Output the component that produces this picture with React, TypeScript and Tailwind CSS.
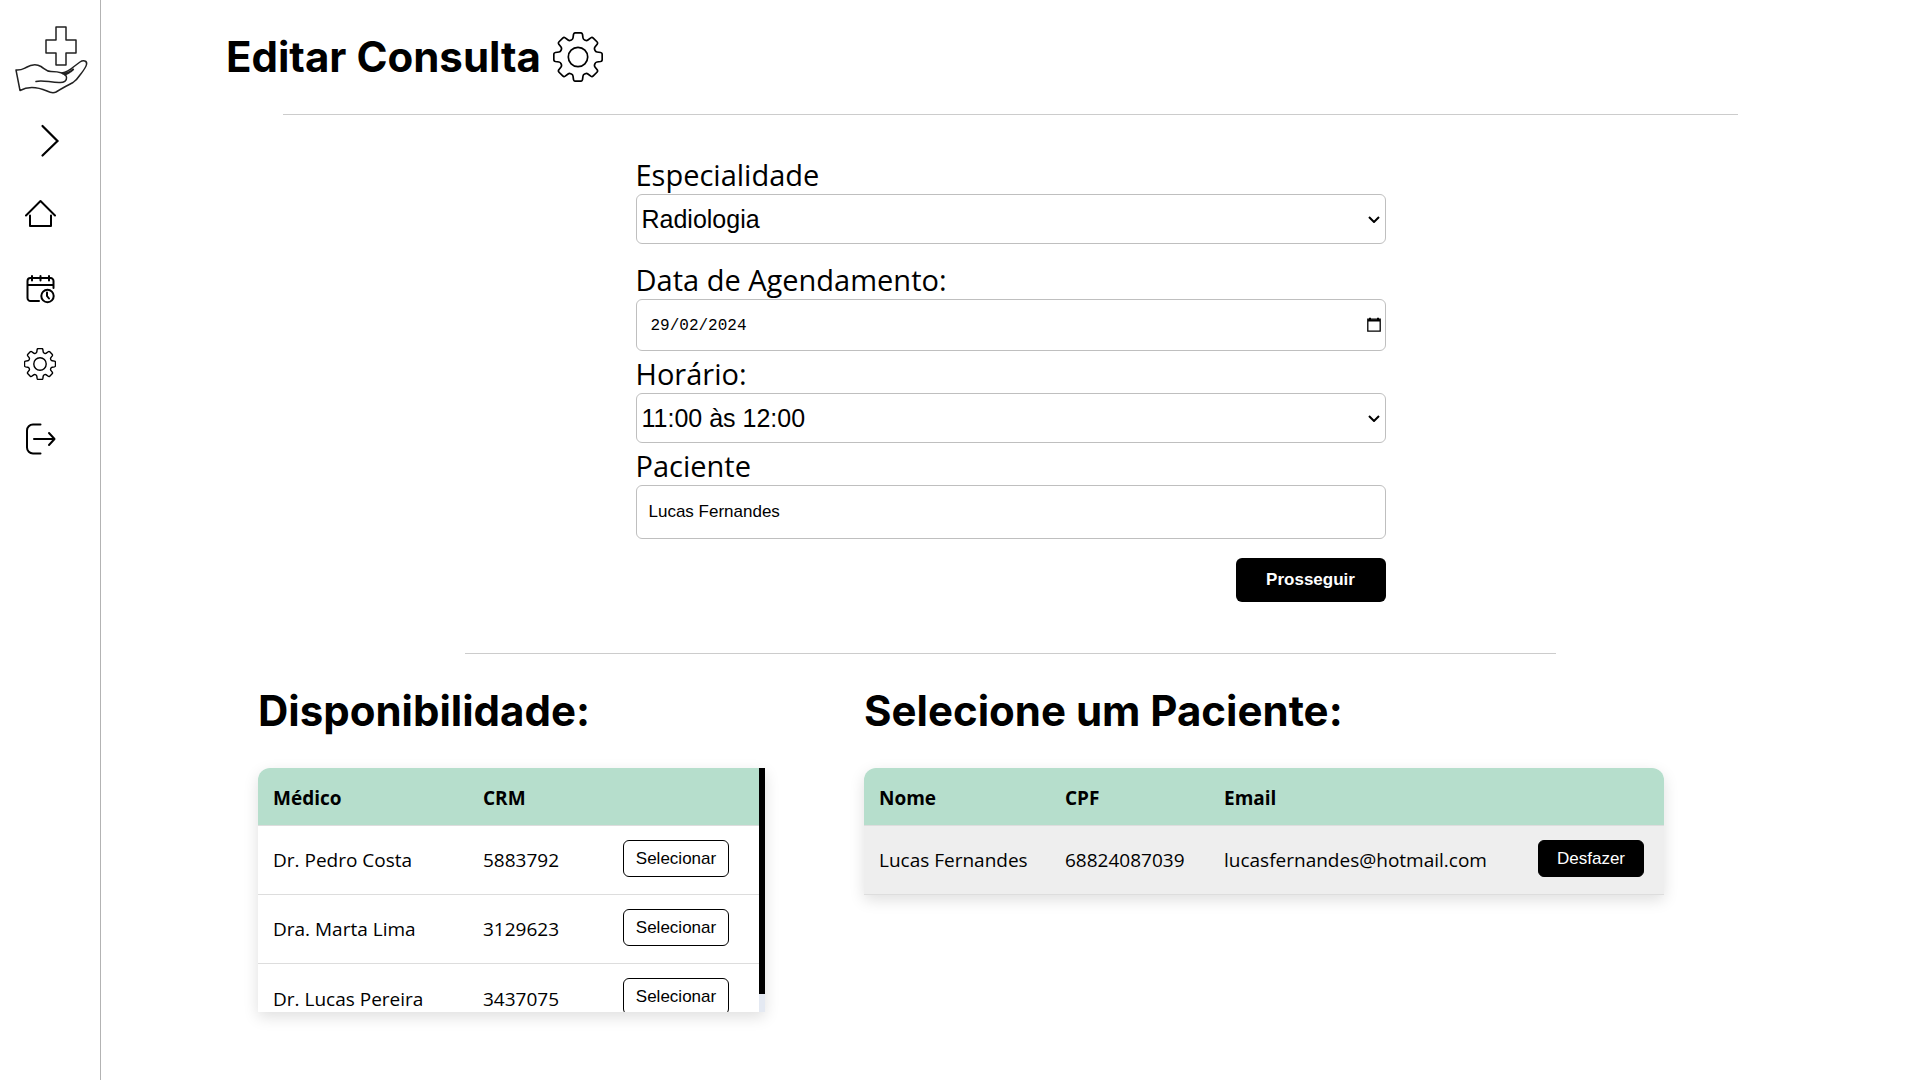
import React from "react";

const fieldBox =
  "w-full rounded-md border border-[#bfbfbf] bg-white text-black outline-none";
const labelText =
  "block font-['Open_Sans',sans-serif] text-[29px] leading-[38px] text-black";
const heading =
  "font-['Inter',sans-serif] text-[42px] font-bold leading-[60px] text-black";

const doctors = [
  { name: "Dr. Pedro Costa", crm: "5883792" },
  { name: "Dra. Marta Lima", crm: "3129623" },
  { name: "Dr. Lucas Pereira", crm: "3437075" },
];

/* Outline of an eight-toothed gear centred in a 50 x 50 box. */
function gearPath() {
  const parts: string[] = [];
  for (let i = 0; i < 8; i++) {
    const a = (i * Math.PI) / 4;
    const p = (x: number, y: number) =>
      `${(25 + x * Math.cos(a) - y * Math.sin(a)).toFixed(2)} ${(25 + x * Math.sin(a) + y * Math.cos(a)).toFixed(2)}`;
    parts.push(`${i === 0 ? "M" : "L"}${p(-6.6, -17)}`);
    parts.push(`Q${p(-5.2, -17.6)} ${p(-5, -19)}`);
    parts.push(`L${p(-4.5, -22.6)}`);
    parts.push(`Q${p(-4.2, -24.2)} ${p(-2.6, -24.2)}`);
    parts.push(`L${p(2.6, -24.2)}`);
    parts.push(`Q${p(4.2, -24.2)} ${p(4.5, -22.6)}`);
    parts.push(`L${p(5, -19)}`);
    parts.push(`Q${p(5.2, -17.6)} ${p(6.6, -17)}`);
  }
  return parts.join(" ") + "Z";
}

function Gear({ className, stroke }: { className: string; stroke: number }) {
  return (
    <svg viewBox="0 0 50 50" className={className} fill="none" stroke="black" strokeWidth={stroke} strokeLinejoin="round" aria-hidden="true">
      <path d={gearPath()} />
      <circle cx="25" cy="25" r="9.7" />
    </svg>
  );
}

function Logo() {
  return (
    <svg viewBox="0 0 80 80" className="size-20" fill="none" stroke="#222" strokeWidth="1.500" strokeLinejoin="round" strokeLinecap="round" role="img" aria-label="Clínica">
      <path d="M46 11h10v13h10v13H56v12H46V37H36V24h10z" />
      <path d="M6 54c5 .5 7-1 10-2.500C21 48.500 27 48 31 50.500c4 2.500 5 5 10 5 4 0 8 .5 11 1.500 3-.5 8-3 12-6.500l6-4.500c3-2 7.500-1.500 6.500 2.500-.5 3-3 6-6.500 10.500-2 3-4 5.500-7 7.500-6 3-12 6.500-17 9.500-3 1.500-6 .5-9-1-7-3-18-5.500-27-.5z" />
      <path d="M26 65.500c6-2 14 1 23 1 5 .5 8-2 7.500-5 0-2-2-3.500-4.500-4.500" />
      <path d="M53 57.500c3 .3 7-1.300 10-4M55 58.500l4-2" strokeWidth="2.200" />
    </svg>
  );
}

function Chevron() {
  return (
    <svg viewBox="0 0 12 8" className="pointer-events-none absolute right-1.5 top-1/2 h-2 w-3 -translate-y-1/2" fill="none" stroke="black" strokeWidth="2" aria-hidden="true">
      <path d="M1 2l5 5 5-5" />
    </svg>
  );
}

function Sidebar() {
  return (
    <aside className="flex w-[101px] shrink-0 flex-col border-r border-[#b3b3b3]">
      <div className="pl-2.5 pt-4">
        <Logo />
      </div>
      <nav className="flex flex-col items-start gap-[43px] pl-6 pt-[27px]">
        <button type="button" aria-label="Expandir menu" className="ml-2">
          <svg viewBox="0 0 32 32" className="size-8 overflow-visible" fill="none" stroke="black" strokeWidth="2.200" strokeLinecap="round" strokeLinejoin="miter">
            <path d="M10.500 3L25.500 18 10.500 32.500" />
          </svg>
        </button>
        <a href="#inicio" aria-label="Início">
          <svg viewBox="0 0 32 32" className="size-8" fill="none" stroke="black" strokeWidth="2" strokeLinecap="round" strokeLinejoin="round">
            <path d="M2 17.500L16.500 3 31 17.500M6 17.500V28h21V17.500" />
          </svg>
        </a>
        <a href="#consultas" aria-label="Consultas">
          <svg viewBox="0 0 32 32" className="size-8" fill="none" stroke="black" strokeWidth="2" strokeLinecap="round">
            <path d="M15 28H6.500a3 3 0 0 1-3-3V8a3 3 0 0 1 3-3h20a3 3 0 0 1 3 3v7M3.500 12h26M8 3v4.500M16.500 3v4.500M25 3v4.500" />
            <circle cx="23.500" cy="23" r="6.200" />
            <path d="M23 19.500V23l2 2.500" />
          </svg>
        </a>
        <a href="#configuracoes" aria-label="Configurações">
          <Gear className="size-8" stroke={2.2} />
        </a>
        <a href="#sair" aria-label="Sair">
          <svg viewBox="0 0 32 32" className="size-8" fill="none" stroke="black" strokeWidth="2" strokeLinecap="round" strokeLinejoin="round">
            <path d="M16.500 1.500H9a6 6 0 0 0-6 6v17a6 6 0 0 0 6 6h7.500M10 16h20M25 10l5.500 6-5.500 6" />
          </svg>
        </a>
      </nav>
    </aside>
  );
}

function Form() {
  return (
    <form className="mx-auto mt-[41px] w-full max-w-[750px]" onSubmit={(e) => e.preventDefault()}>
      <label htmlFor="especialidade" className={labelText}>Especialidade</label>
      <div className="relative">
        <select id="especialidade" defaultValue="Radiologia" className={`${fieldBox} h-[50px] appearance-none px-[5px] pt-0.5 font-['Liberation_Sans',Arial,sans-serif] text-[25px]`}>
          <option>Radiologia</option>
        </select>
        <Chevron />
      </div>

      <label htmlFor="data" className={`${labelText} mt-[17px]`}>Data de Agendamento:</label>
      <div className="relative">
        <input id="data" type="text" defaultValue="29/02/2024" className={`${fieldBox} h-[52px] px-3.5 pt-0.5 font-['Liberation_Mono',monospace] text-base`} />
        <button type="button" aria-label="Abrir calendário" className="absolute right-[5px] top-1/2 -translate-y-1/2">
          <svg viewBox="0 0 14 16" className="h-4 w-3.5" fill="none" stroke="black" strokeWidth="1.300">
            <path d="M.8 2.200h12.400v12H.8z" />
            <path d="M1 3.500h12M3 .8v2M11 .8v2" strokeWidth="2" />
          </svg>
        </button>
      </div>

      <label htmlFor="horario" className={`${labelText} mt-1`}>Horário:</label>
      <div className="relative">
        <select id="horario" defaultValue="11:00 às 12:00" className={`${fieldBox} h-[50px] appearance-none px-[5px] pt-0.5 font-['Liberation_Sans',Arial,sans-serif] text-[25px]`}>
          <option>11:00 às 12:00</option>
        </select>
        <Chevron />
      </div>

      <label htmlFor="paciente" className={`${labelText} mt-1`}>Paciente</label>
      <input id="paciente" type="text" defaultValue="Lucas Fernandes" className={`${fieldBox} block h-[54px] px-3 font-['Liberation_Sans',Arial,sans-serif] text-[17px]`} />

      <div className="mt-[19px] flex justify-end">
        <button type="submit" className="h-11 w-[150px] rounded-md bg-black font-['Liberation_Sans',Arial,sans-serif] text-[17px] font-bold text-white">
          Prosseguir
        </button>
      </div>
    </form>
  );
}

const th = "h-[57px] px-[15px] pt-[3px] text-left font-bold";
const td = "h-[69px] px-[15px] pt-0.5";
const actionCell = "h-[69px] px-[15px] pb-0.5";
const rowButton =
  "block h-[37px] w-[106px] rounded-md border border-black font-['Liberation_Sans',Arial,sans-serif] text-[17px]";
const table = "w-full table-fixed font-['Open_Sans',sans-serif] text-[19px] text-black";

function Doctors() {
  return (
    <section className="w-[507px]">
      <h2 className={heading}>Disponibilidade:</h2>
      <div className="mt-[27px] flex h-[244px] overflow-hidden rounded-tl-xl shadow-[0_5px_15px_rgba(0,0,0,0.13)]">
        <div className="min-w-0 flex-1 overflow-hidden">
          <table className={table}>
            <thead className="bg-[#b6decc]">
              <tr>
                <th className={`${th} w-[210px]`}>Médico</th>
                <th className={`${th} w-[140px]`}>CRM</th>
                <th className={th} aria-label="Ação" />
              </tr>
            </thead>
            <tbody>
              {doctors.map((d) => (
                <tr key={d.crm} className="border-t border-[#dddddd]">
                  <td className={td}>{d.name}</td>
                  <td className={td}>{d.crm}</td>
                  <td className={actionCell}>
                    <button type="button" className={`${rowButton} bg-white text-black`}>Selecionar</button>
                  </td>
                </tr>
              ))}
            </tbody>
          </table>
        </div>
        <div className="w-1.5 bg-[#e4e9f2]" aria-hidden="true">
          <div className="h-[226px] bg-black" />
        </div>
      </div>
    </section>
  );
}

function Patients() {
  return (
    <section className="w-[800px]">
      <h2 className={heading}>Selecione um Paciente:</h2>
      <div className="mt-[27px] overflow-hidden rounded-t-xl shadow-[0_5px_15px_rgba(0,0,0,0.13)]">
        <table className={table}>
          <thead className="bg-[#b6decc]">
            <tr>
              <th className={`${th} w-[186px]`}>Nome</th>
              <th className={`${th} w-[159px]`}>CPF</th>
              <th className={`${th} w-[314px]`}>Email</th>
              <th className={th} aria-label="Ação" />
            </tr>
          </thead>
          <tbody>
            <tr className="border-y border-[#dddddd] bg-[#eeeeee]">
              <td className={td}>Lucas Fernandes</td>
              <td className={td}>68824087039</td>
              <td className={td}>lucasfernandes@hotmail.com</td>
              <td className={actionCell}>
                <button type="button" className={`${rowButton} bg-black text-white`}>Desfazer</button>
              </td>
            </tr>
          </tbody>
        </table>
      </div>
    </section>
  );
}

export default function App() {
  return (
    <div className="flex min-h-screen bg-white">
      <Sidebar />
      <main className="min-w-0 flex-1">
        <header className="flex items-center gap-3 pl-[125px] pt-[27px]">
          <h1 className={heading}>Editar Consulta</h1>
          <Gear className="size-[50px]" stroke={1.7} />
        </header>
        <hr className="mx-auto mt-[27px] w-4/5 border-[#cccccc]" />
        <Form />
        <hr className="mx-auto mt-[51px] w-3/5 border-[#cccccc]" />
        <div className="flex gap-[99px] pl-[157px] pt-[27px]">
          <Doctors />
          <Patients />
        </div>
      </main>
    </div>
  );
}
